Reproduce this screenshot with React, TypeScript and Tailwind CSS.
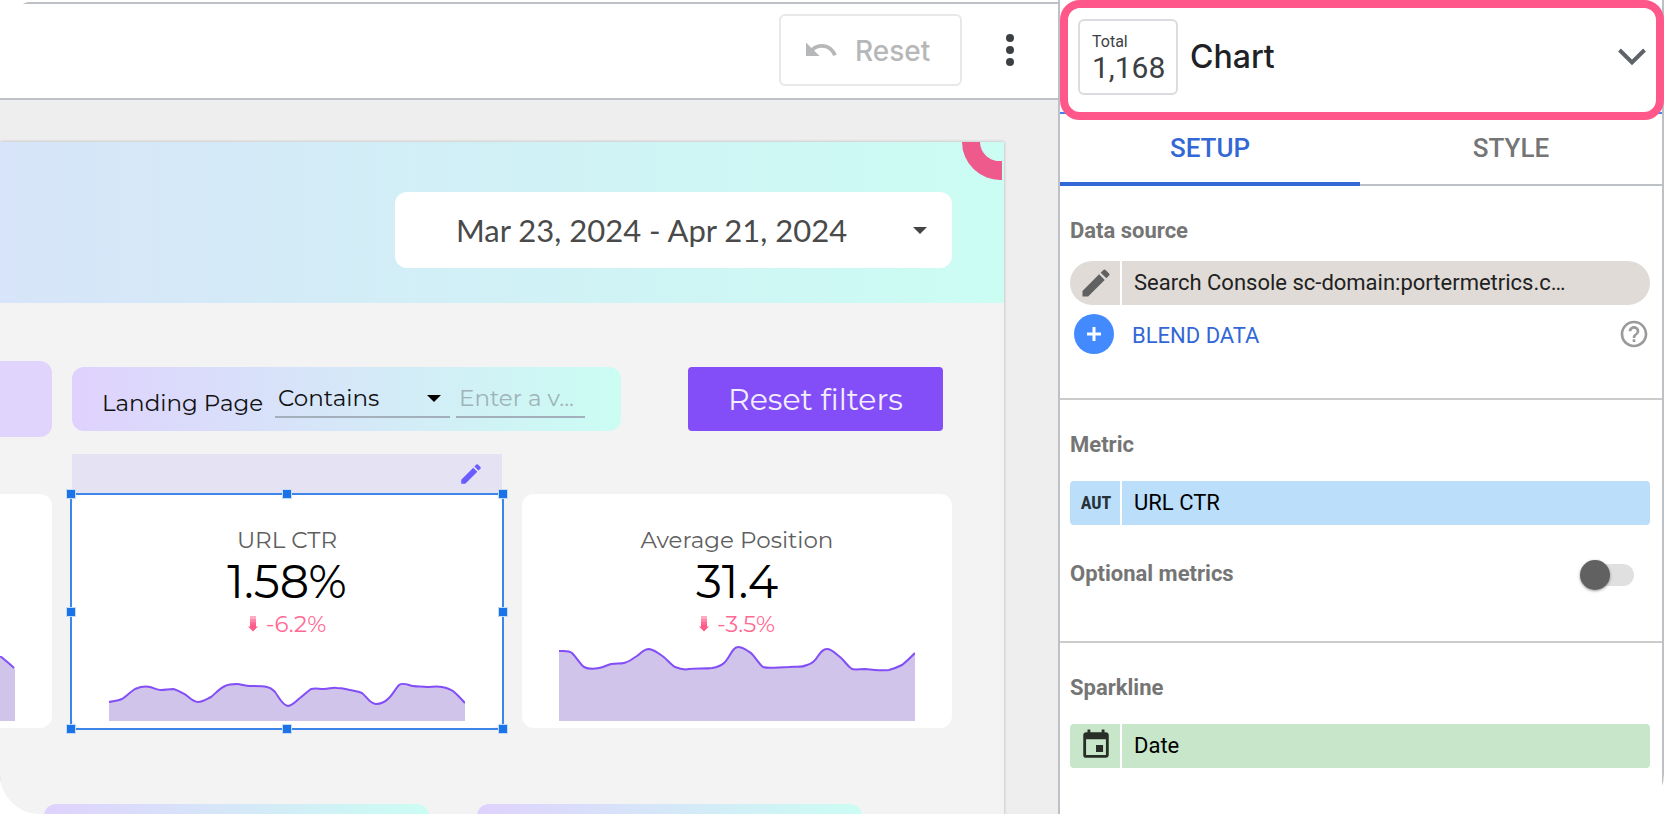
import type { ReactNode } from "react";
import { MdEdit, MdEvent, MdHelpOutline, MdUndo } from "react-icons/md";

const ctrLine =
  "M0 38C5 37 9 37 13 35C18 32 21 28 26 25C31 23 36 22 41 23C45 24 48 26 52 26C56 26 60 25 64 25C69 26 73 29 77 31C81 34 84 38 89 38C94 38 98 35 102 33C107 29 111 24 116 22C120 20 124 20 128 20C132 20 136 22 141 22C147 22 153 22 158 23C163 24 164 26 166 28C170 33 173 41 179 42C184 41 187 37 191 34C196 30 199 27 202 25C206 24 210 25 215 25C220 25 224 23 228 24C233 24 236 25 241 26C246 27 249 27 253 29C258 33 261 40 267 40C273 40 277 37 280 34C284 30 287 24 290 21C294 18 299 21 304 22C309 23 313 22 318 23C323 23 328 22 333 23C338 24 341 25 344 27C349 31 352 35 356 39";

const positionLine =
  "M0 11C5 11 9 10 13 13C18 18 21 24 25 27C29 29 35 29 40 28C45 27 48 25 52 24C57 23 61 24 65 23C70 22 73 19 78 16C82 13 85 9 90 9C95 10 98 12 102 15C107 18 111 24 116 27C121 29 126 30 130 29C138 28 145 29 153 28C159 27 162 26 165 23C171 18 173 7 179 7C185 7 188 11 192 13C197 18 200 24 204 27C210 29 220 27 230 27C237 26 242 28 248 25C253 24 256 21 259 16C262 12 264 9 268 9C273 9 277 14 281 17C286 21 288 26 293 29C296 30 301 29 306 29C314 30 322 31 330 30C337 28 339 27 343 25C348 21 352 17 356 13";

function Sparkline({ line, height }: { line: string; height: number }) {
  return (
    <svg viewBox={`0 0 356 ${height}`} width={356} height={height} className="absolute bottom-[7px] left-[37px]" aria-hidden="true">
      <path d={`${line}V${height}H0Z`} fill="#d0c4ea" />
      <path d={line} fill="none" stroke="#834ef7" strokeWidth="2" />
    </svg>
  );
}

function DownArrow() {
  return (
    <svg viewBox="0 0 10 16" className="h-4 w-[10px]" fill="#ff5b8a" aria-hidden="true">
      <rect x="2" y="0" width="6" height="3" opacity=".5" />
      <rect x="2" y="3" width="6" height="3" opacity=".75" />
      <rect x="2" y="6" width="6" height="3" opacity=".9" />
      <path d="M2 8.500h6V10.500h2L5 15.500 0 10.500h2Z" />
    </svg>
  );
}

function Caret({ className }: { className: string }) {
  return (
    <svg viewBox="0 0 14 7" className={`h-[7px] w-[14px] ${className}`} fill="currentColor" aria-hidden="true">
      <path d="M0 0h14L7 7Z" />
    </svg>
  );
}

type ScorecardProps = {
  label: string;
  value: string;
  delta: string;
  line: string;
  lineHeight: number;
  children?: ReactNode;
};

function Scorecard({ label, value, delta, line, lineHeight, children }: ScorecardProps) {
  return (
    <article className="relative flex h-[234px] w-[430px] shrink-0 flex-col items-center rounded-xl bg-white pt-8">
      <h3 className="text-[23px] leading-7 text-[#5f5f5f]">{label}</h3>
      <p className="text-[46px] leading-[56px] text-black">{value}</p>
      <p className="flex items-center gap-2 text-[23px] leading-7 text-[#ff6a95]">
        <DownArrow />
        {delta}
      </p>
      <Sparkline line={line} height={lineHeight} />
      {children}
    </article>
  );
}

function Handle({ className }: { className: string }) {
  return <span className={`absolute size-2 bg-[#1a73e8] ring-1 ring-[#c6dbf8] ${className}`} />;
}

function Selection() {
  return (
    <>
      <div className="absolute inset-x-0 -top-10 flex h-10 items-center justify-end bg-[#e4e2f3] pr-[18px]">
        <button type="button" aria-label="Edit chart">
          <MdEdit className="size-[26px] text-[#6a5cff]" />
        </button>
      </div>
      <div className="pointer-events-none absolute -inset-x-0.5 -top-px -bottom-0.5 border-2 border-[#3d85e8]">
        <Handle className="-top-[5px] -left-[5px]" />
        <Handle className="-top-[5px] left-1/2 -translate-x-1/2" />
        <Handle className="-top-[5px] -right-[5px]" />
        <Handle className="top-1/2 -left-[5px] -translate-y-1/2" />
        <Handle className="top-1/2 -right-[5px] -translate-y-1/2" />
        <Handle className="-bottom-[5px] -left-[5px]" />
        <Handle className="-bottom-[5px] left-1/2 -translate-x-1/2" />
        <Handle className="-right-[5px] -bottom-[5px]" />
      </div>
    </>
  );
}

function Toolbar() {
  return (
    <header className="mt-[2px] flex h-[98px] shrink-0 items-center justify-end gap-8 border-y-2 border-[#bdc1c6] bg-white pr-8 pb-[2px]">
      <button type="button" className="flex h-[72px] w-[183px] items-center gap-4 rounded-md border-2 border-[#e8e8e8] pl-[22px] text-[#b5b7b9]">
        <MdUndo className="size-9" />
        <span className="pt-[2px] font-['Google_Sans',Inter,sans-serif] text-[28px] font-medium">Reset</span>
      </button>
      <button type="button" aria-label="More options" className="flex h-12 w-8 items-center justify-center">
        <svg viewBox="0 0 8 32" className="h-8 w-2" fill="#3c4043" aria-hidden="true">
          <circle cx="4" cy="4" r="4" />
          <circle cx="4" cy="16" r="4" />
          <circle cx="4" cy="28" r="4" />
        </svg>
      </button>
    </header>
  );
}

function Report() {
  return (
    <main className="flex min-h-0 flex-1 flex-col overflow-hidden bg-[#eeeeee] pt-[42px] pr-[54px] font-[Montserrat,Inter,sans-serif]">
      <div className="flex-1 bg-[#f3f3f3] shadow-[0_0_3px_rgba(0,0,0,0.25)]">
        <div className="relative flex h-[161px] items-center justify-end bg-linear-to-r/srgb from-[#d7e4f9] to-[#cbfdf3] pt-[14px] pr-[52px]">
          <svg viewBox="0 0 40 38" className="absolute top-0 right-[2px] h-[38px] w-10" aria-hidden="true">
            <path d="M0 0H18A20 19 0 0 0 40 19V38A39 38 0 0 1 0 0Z" fill="#ee5a8b" />
          </svg>
          <button type="button" className="flex h-[76px] w-[557px] items-center justify-between rounded-xl bg-white pt-[2px] pr-[25px] pl-[61px] font-[Lato,sans-serif] text-[31px] text-[#4a4a4a]">
            Mar 23, 2024 - Apr 21, 2024
            <Caret className="text-[#444]" />
          </button>
        </div>

        <div className="mt-[58px] flex h-[76px] items-center justify-end pr-[61px]">
          <div className="h-[76px] min-w-0 flex-1 rounded-r-xl bg-[#e0d4fc]" />
          <div className="ml-5 flex h-16 w-[549px] shrink-0 items-center rounded-xl bg-linear-to-r/srgb from-[#dfd2fd] to-[#cbfdf3] pl-[30px] text-[23px] text-[#111]">
            <label htmlFor="landing-match" className="w-[173px] shrink-0 pt-2 whitespace-nowrap">
              Landing Page
            </label>
            <div className="relative w-[175px] shrink-0">
              <select id="landing-match" className="h-[38px] w-full appearance-none border-b-2 border-[#a3afbb] bg-transparent pl-[3px]">
                <option>Contains</option>
              </select>
              <Caret className="pointer-events-none absolute top-[15px] right-[9px] text-black" />
            </div>
            <input
              aria-label="Landing page value"
              placeholder="Enter a v..."
              className="ml-[6px] h-[38px] w-[129px] border-b-2 border-[#a3afbb] bg-transparent pl-[3px] placeholder:text-[#9fb2b7]"
            />
          </div>
          <button type="button" className="ml-[67px] h-16 w-[255px] shrink-0 rounded bg-[#834ef7] text-[30px] text-[#f3eefe]">
            Reset filters
          </button>
        </div>

        <div className="mt-[57px] flex justify-end gap-5 pr-[52px]">
          <div className="relative min-w-0 flex-1 rounded-r-xl bg-white">
            <svg viewBox="0 0 15 65" className="absolute bottom-[7px] left-0 h-[65px] w-[15px]" aria-hidden="true">
              <path d="M0 0C5 4 10 8 14 12L15 13V65H0Z" fill="#d0c4ea" />
              <path d="M0 0C5 4 10 8 14 12" fill="none" stroke="#834ef7" strokeWidth="2" />
            </svg>
          </div>
          <Scorecard label="URL CTR" value="1.58%" delta="-6.2%" line={ctrLine} lineHeight={57}>
            <Selection />
          </Scorecard>
          <Scorecard label="Average Position" value="31.4" delta="-3.5%" line={positionLine} lineHeight={81} />
        </div>

        <div className="mt-[76px] flex justify-end gap-12 pr-[142px]">
          <div className="h-16 w-[385px] rounded-xl bg-linear-to-r/srgb from-[#dfd2fd] to-[#cbfdf3]" />
          <div className="h-16 w-[385px] rounded-xl bg-linear-to-r/srgb from-[#dfd2fd] to-[#cbfdf3]" />
        </div>
      </div>
    </main>
  );
}

function Heading({ children }: { children: ReactNode }) {
  return <h2 className="text-[22px] leading-[26px] font-bold text-[#757575]">{children}</h2>;
}

function Panel() {
  return (
    <aside className="flex w-[606px] shrink-0 flex-col border-x-2 border-[#bdc1c6] bg-white font-[Roboto,sans-serif]">
      <div className="h-[114px] shrink-0 border-b-2 border-[#4285f4]" />
      <div role="tablist" className="flex h-[72px] shrink-0 text-[26px] font-medium">
        <button type="button" role="tab" aria-selected="true" className="w-[300px] border-b-4 border-[#3367d6] text-[#3367d6]">
          SETUP
        </button>
        <button type="button" role="tab" aria-selected="false" className="flex-1 border-b-2 border-[#bdc1c6] pb-[2px] text-[#757575]">
          STYLE
        </button>
      </div>

      <section className="h-[214px] shrink-0 border-b-2 border-[#cccccc] pt-8 pr-3 pl-[10px]">
        <Heading>Data source</Heading>
        <div className="mt-[17px] flex h-11 gap-[2px] overflow-hidden rounded-full text-[22px] text-[#212121]">
          <button type="button" aria-label="Edit data source" className="flex w-[50px] items-center justify-center bg-[#e0dbd7] pl-[2px]">
            <MdEdit className="size-9 text-[#616161]" />
          </button>
          <button type="button" className="flex-1 bg-[#e0dbd7] pb-[2px] pl-3 text-left">
            Search Console sc-domain:portermetrics.c…
          </button>
        </div>
        <div className="mt-[9px] flex items-center justify-between pl-1">
          <button type="button" className="flex items-center gap-[18px] text-[22px] text-[#3367d6]">
            <span className="flex size-10 items-center justify-center rounded-full bg-[#448aff]">
              <svg viewBox="0 0 14 14" className="size-[14px]" fill="#fff" aria-hidden="true">
                <path d="M5.500 0h3v5.500H14v3H8.500V14h-3V8.500H0v-3h5.500Z" />
              </svg>
            </span>
            <span className="pt-[2px]">BLEND DATA</span>
          </button>
          <button type="button" aria-label="Help">
            <MdHelpOutline className="size-8 text-[#9a9a9a]" />
          </button>
        </div>
      </section>

      <section className="h-[243px] shrink-0 border-b-2 border-[#cccccc] pt-8 pr-3 pl-[10px]">
        <Heading>Metric</Heading>
        <button type="button" className="mt-[23px] flex h-11 w-full gap-[2px] overflow-hidden rounded text-[22px] text-black">
          <span className="flex h-full w-[50px] items-center justify-center bg-[#bbdefb] pl-[2px] font-['Roboto_Condensed',Roboto,sans-serif] text-lg font-bold text-[#263238]">
            AUT
          </span>
          <span className="flex h-full flex-1 items-center bg-[#bbdefb] pb-[2px] pl-3">URL CTR</span>
        </button>
        <label className="mt-[34px] flex items-center justify-between pr-4">
          <span className="text-[22px] leading-[30px] font-bold text-[#757575]">Optional metrics</span>
          <span className="relative mt-[2px] h-[22px] w-[50px] rounded-full bg-[#e0e0e0]">
            <input type="checkbox" role="switch" className="absolute inset-0 appearance-none" />
            <span className="absolute -top-1 -left-1 size-[30px] rounded-full bg-[#616161] shadow-[0_1px_3px_rgba(0,0,0,0.4)]" />
          </span>
        </label>
      </section>

      <section className="pt-8 pr-3 pl-[10px]">
        <Heading>Sparkline</Heading>
        <button type="button" className="mt-[23px] flex h-11 w-full gap-[2px] overflow-hidden rounded text-[22px] text-black">
          <span className="flex h-full w-[50px] items-center justify-center bg-[#c8e6c9] pb-[2px] pl-[2px]">
            <MdEvent className="size-[34px] text-[#282f29]" />
          </span>
          <span className="flex h-full flex-1 items-center bg-[#c8e6c9] pb-[2px] pl-3">Date</span>
        </button>
      </section>
    </aside>
  );
}

function ChartPicker() {
  return (
    <button type="button" className="absolute top-0 right-0 flex h-[120px] w-[604px] items-center rounded-[20px] border-8 border-[#ff5789] bg-white px-[10px] pb-[6px] font-[Roboto,sans-serif]">
      <span className="flex h-[76px] w-[100px] flex-col rounded-md border-2 border-[#dadce0] pt-[11px] pl-3 text-left text-[#3c4043]">
        <span className="text-base leading-5">Total</span>
        <span className="text-[30px] leading-8">1,168</span>
      </span>
      <span className="ml-3 font-['Google_Sans',Inter,sans-serif] text-[32px] font-medium text-[#202124]">Chart</span>
      <svg viewBox="0 0 28 18" className="ml-auto h-[18px] w-7" fill="none" stroke="#5f6368" strokeWidth="4" aria-hidden="true">
        <path d="M1.500 2 14 14.500 26.500 2" />
      </svg>
    </button>
  );
}

export default function App() {
  return (
    <div className="relative h-screen overflow-hidden bg-white">
      <div className="flex h-full overflow-hidden rounded-l-[40px] rounded-br-[40px]">
        <div className="flex min-w-0 flex-1 flex-col">
          <Toolbar />
          <Report />
        </div>
        <Panel />
      </div>
      <ChartPicker />
    </div>
  );
}
